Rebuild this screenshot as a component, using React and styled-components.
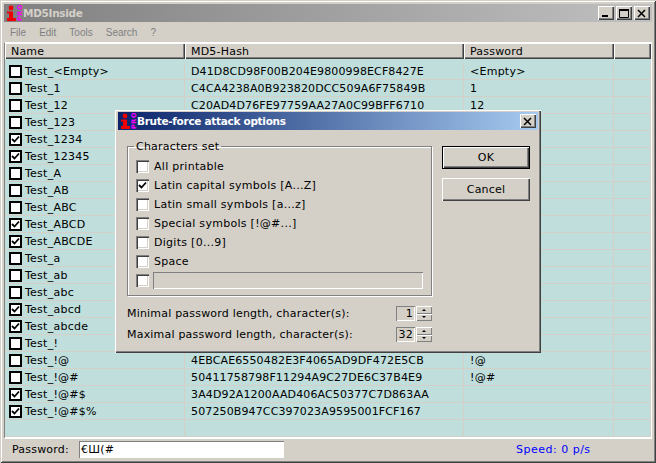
import React from 'react';
import styled, { createGlobalStyle } from 'styled-components';

const GlobalStyle = createGlobalStyle`
  html, body {
    margin: 0;
    padding: 0;
    overflow: hidden;
    background: #d4d0c8;
  }
  * {
    box-sizing: border-box;
  }
`;

const Window = styled.div`
  position: relative;
  width: 656px;
  height: 463px;
  display: flex;
  flex-direction: column;
  padding: 4px 4px 3px 4px;
  background: #d4d0c8;
  font-family: 'DejaVu Sans', Verdana, sans-serif;
  font-size: 11px;
  letter-spacing: 0.2px;
  color: #000;
  box-shadow: inset 1px 1px 0 #d4d0c8, inset -1px -1px 0 #404040, inset 2px 2px 0 #fff, inset -2px -2px 0 #808080;
`;

const TitleBar = styled.div`
  height: 18px;
  flex: none;
  display: flex;
  align-items: center;
  justify-content: space-between;
  padding: 0 2px 0 1px;
  background: ${(props) => (props.$active
    ? 'linear-gradient(to right, #0a246a, #a6caf0)'
    : 'linear-gradient(to right, #808080, #c0c0c0)')};
  color: ${(props) => (props.$active ? '#fff' : '#d4d0c8')};
  font-weight: bold;
  font-size: 10.5px;
  letter-spacing: -0.3px;
`;

const TitleLeft = styled.div`
  display: flex;
  align-items: center;
`;

const TitleButtons = styled.div`
  display: flex;
  gap: 2px;
`;

const CaptionButton = styled.div`
  width: 16px;
  height: 14px;
  display: flex;
  align-items: center;
  justify-content: center;
  background: #d4d0c8;
  box-shadow: inset 1px 1px 0 #fff, inset -1px -1px 0 #404040, inset -2px -2px 0 #808080;
`;

const MenuBar = styled.div`
  height: 20px;
  flex: none;
  display: flex;
  align-items: center;
  gap: 13px;
  padding: 1px 0 0 6px;
  font-family: 'Liberation Sans', Arial, sans-serif;
  font-size: 10px;
  letter-spacing: 0;
  color: #808080;
`;

const Table = styled.div`
  flex: none;
  height: 397px;
  overflow: hidden;
  background: #bfdedc;
  border-top: 1px solid #fff;
  border-left: 1px solid #808080;
  border-right: 1px solid #fff;
  border-bottom: 2px solid #fff;
`;

const cols = '180px 279px 150px 1fr';

const HeaderRow = styled.div`
  display: grid;
  grid-template-columns: ${cols};
  height: 16px;
`;

const HeaderCell = styled.div`
  display: flex;
  align-items: center;
  padding: 1px 0 0 6px;
  background: #d4d0c8;
  box-shadow: inset 1px 1px 0 #fff, inset -1px -1px 0 #404040, inset -2px -2px 0 #808080;
`;

const Row = styled.div`
  display: grid;
  grid-template-columns: ${cols};
  height: ${(props) => (props.$first ? 21 : 17)}px;
  padding-top: ${(props) => (props.$first ? 4 : 0)}px;
  border-bottom: 1px solid #d4d0c8;
`;

const Cell = styled.div`
  display: flex;
  align-items: center;
  gap: 3px;
  padding-left: ${(props) => props.$pad || 6}px;
  letter-spacing: ${(props) => (props.$hash ? 0.13 : 0.25)}px;
  border-right: 1px solid #d4d0c8;
  white-space: nowrap;
`;

const ListCheck = styled.div`
  width: 13px;
  height: 13px;
  flex: none;
  background: #fff;
  border: 2px solid #000;
  display: flex;
  align-items: center;
  justify-content: center;
`;

const StatusBar = styled.div`
  flex: 1;
  display: flex;
  align-items: center;
  padding: 0 0 0 8px;
`;

const StatusLabel = styled.span`
  width: 67px;
`;

const PasswordInput = styled.div`
  width: 205px;
  height: 17px;
  padding-left: 2px;
  display: flex;
  align-items: center;
  background: #fff;
  box-shadow: inset 1px 1px 0 #808080;
`;

const Speed = styled.span`
  margin-left: 232px;
  letter-spacing: 0.5px;
  color: #0000ff;
`;

const Dialog = styled.div`
  position: absolute;
  left: 115px;
  top: 110px;
  width: 426px;
  height: 243px;
  padding: 2px 3px 3px 3px;
  display: flex;
  flex-direction: column;
  background: #d4d0c8;
  box-shadow: inset 1px 1px 0 #fff, inset -1px -1px 0 #404040, inset -2px -2px 0 #808080;
`;

const DialogBody = styled.div`
  display: grid;
  grid-template-columns: 305px 88px;
  column-gap: 10px;
  align-items: start;
  padding: 11px 0 0 9px;
`;

const Group = styled.fieldset`
  margin: 0;
  padding: 8px 8px 0 8px;
  height: 155px;
  min-width: 0;
  border: 1px solid #808080;
  box-shadow: 1px 1px 0 #fff, inset 1px 1px 0 #fff;
`;

const GroupTitle = styled.legend`
  margin-left: -2px;
  padding: 0 2px;
  line-height: 11px;
`;

const OptionList = styled.div`
  display: flex;
  flex-direction: column;
  gap: 6px;
`;

const Option = styled.label`
  display: flex;
  align-items: center;
  gap: 5px;
  height: 13px;
  letter-spacing: 0.28px;
`;

const SunkenCheck = styled.div`
  width: 13px;
  height: 13px;
  flex: none;
  background: #fff;
  display: flex;
  align-items: center;
  justify-content: center;
  box-shadow: inset 1px 1px 0 #808080, inset 2px 2px 0 #404040, inset -1px -1px 0 #fff, inset -2px -2px 0 #d4d0c8;
`;

const CustomField = styled.div`
  flex: 1;
  height: 17px;
  margin-left: -1px;
  box-shadow: inset 1px 1px 0 #808080, inset -1px -1px 0 #fff;
`;

const ButtonColumn = styled.div`
  display: flex;
  flex-direction: column;
  gap: 9px;
  margin-top: 5px;
`;

const Button = styled.div`
  height: 23px;
  display: flex;
  align-items: center;
  justify-content: center;
  background: #d4d0c8;
  border: ${(props) => (props.$default ? '1px solid #000' : 'none')};
  box-shadow: inset 1px 1px 0 #fff, inset -1px -1px 0 #404040, inset -2px -2px 0 #808080;
`;

const LengthList = styled.div`
  display: flex;
  flex-direction: column;
  gap: 6px;
  padding: 10px 0 0 9px;
  width: 314px;
`;

const LengthRow = styled.div`
  display: flex;
  align-items: center;
  justify-content: space-between;
  height: 15px;
`;

const Spinner = styled.div`
  display: flex;
  gap: 1px;
`;

const SpinValue = styled.div`
  width: 19px;
  height: 15px;
  padding-right: 2px;
  display: flex;
  align-items: center;
  justify-content: flex-end;
  box-shadow: inset 1px 1px 0 #808080, inset -1px -1px 0 #fff;
`;

const SpinArrows = styled.div`
  display: flex;
  flex-direction: column;
  width: 16px;
  height: 15px;
`;

const SpinButton = styled.div`
  flex: 1;
  display: flex;
  align-items: center;
  justify-content: center;
  background: #d4d0c8;
  box-shadow: inset 1px 1px 0 #fff, inset -1px -1px 0 #808080;

  &::after {
    content: '';
    border-left: 2px solid transparent;
    border-right: 2px solid transparent;
    ${(props) => (props.$down ? 'border-top: 2px solid #000;' : 'border-bottom: 2px solid #000;')}
  }
`;

// hash and password of the rows under the dialog can't be seen, so they stay empty
const rows = [
  ['Test_<Empty>', 'D41D8CD98F00B204E9800998ECF8427E', '<Empty>', false],
  ['Test_1', 'C4CA4238A0B923820DCC509A6F75849B', '1', false],
  ['Test_12', 'C20AD4D76FE97759AA27A0C99BFF6710', '12', false],
  ['Test_123', '', '', false],
  ['Test_1234', '', '', true],
  ['Test_12345', '', '', true],
  ['Test_A', '', '', false],
  ['Test_AB', '', '', false],
  ['Test_ABC', '', '', false],
  ['Test_ABCD', '', '', true],
  ['Test_ABCDE', '', '', true],
  ['Test_a', '', '', false],
  ['Test_ab', '', '', false],
  ['Test_abc', '', '', false],
  ['Test_abcd', '', '', true],
  ['Test_abcde', '', '', true],
  ['Test_!', '', '', false],
  ['Test_!@', '4EBCAE6550482E3F4065AD9DF472E5CB', '!@', false],
  ['Test_!@#', '50411758798F11294A9C27DE6C37B4E9', '!@#', false],
  ['Test_!@#$', '3A4D92A1200AAD406AC50377C7D863AA', '', true],
  ['Test_!@#$%', '507250B947CC397023A9595001FCF167', '', true],
  ['', '', '', null],
];

const options = [
  ['All printable', false],
  ['Latin capital symbols [A...Z]', true],
  ['Latin small symbols [a...z]', false],
  ['Special symbols [!@#...]', false],
  ['Digits [0...9]', false],
  ['Space', false],
];

function CheckMark() {
  return (
    <svg width="9" height="9" viewBox="0 0 9 9">
      <path d="M1 4 L3.5 6.5 L8 1.5" fill="none" stroke="#000" strokeWidth="1.8" />
    </svg>
  );
}

function AppIcon() {
  return (
    <svg width="18" height="17" viewBox="0 0 18 17" style={{ flex: 'none' }}>
      <circle cx="6" cy="3" r="2.4" fill="#f00000" />
      <path d="M2 6.5 H8 V13 H11 V16 H2 V13 H4 V8.5 H2 Z" fill="#f00000" />
      <text x="0" y="0" transform="translate(17 16) rotate(-90)" fontFamily="DejaVu Sans" fontSize="6.5" letterSpacing="0.6" fill="#ff00ff">PRO</text>
    </svg>
  );
}

function App() {
  return (
    <>
      <GlobalStyle />
      <Window>
        <TitleBar>
          <TitleLeft><AppIcon />MD5Inside</TitleLeft>
          <TitleButtons>
            <CaptionButton>
              <svg width="10" height="9"><rect x="1" y="6" width="6" height="2" fill="#000" /></svg>
            </CaptionButton>
            <CaptionButton>
              <svg width="10" height="9"><path d="M0.5 1 H9.5 V8.5 H0.5 Z" fill="none" stroke="#000" /><rect x="0" y="0" width="10" height="2" fill="#000" /></svg>
            </CaptionButton>
            <CaptionButton>
              <svg width="10" height="9"><path d="M1 1 L8 8 M8 1 L1 8" stroke="#000" strokeWidth="1.5" /></svg>
            </CaptionButton>
          </TitleButtons>
        </TitleBar>
        <MenuBar>
          <span>File</span><span>Edit</span><span>Tools</span><span>Search</span><span>?</span>
        </MenuBar>
        <Table>
          <HeaderRow>
            <HeaderCell>Name</HeaderCell>
            <HeaderCell>MD5-Hash</HeaderCell>
            <HeaderCell>Password</HeaderCell>
            <HeaderCell />
          </HeaderRow>
          {rows.map(([name, hash, password, checked], i) => (
            <Row key={i} $first={i === 0}>
              <Cell $pad={4}>
                {checked !== null && <ListCheck>{checked && <CheckMark />}</ListCheck>}
                {name}
              </Cell>
              <Cell $hash>{hash}</Cell>
              <Cell>{password}</Cell>
              <Cell />
            </Row>
          ))}
        </Table>
        <StatusBar>
          <StatusLabel>Password:</StatusLabel>
          <PasswordInput>€Ш(#</PasswordInput>
          <Speed>Speed: 0 p/s</Speed>
        </StatusBar>

        <Dialog>
          <TitleBar $active>
            <TitleLeft><AppIcon />Brute-force attack options</TitleLeft>
            <CaptionButton>
              <svg width="10" height="9"><path d="M1 1 L8 8 M8 1 L1 8" stroke="#000" strokeWidth="1.5" /></svg>
            </CaptionButton>
          </TitleBar>
          <DialogBody>
            <Group>
              <GroupTitle>Characters set</GroupTitle>
              <OptionList>
                {options.map(([label, checked]) => (
                  <Option key={label}>
                    <SunkenCheck>{checked && <CheckMark />}</SunkenCheck>
                    {label}
                  </Option>
                ))}
                <Option>
                  <SunkenCheck />
                  <CustomField />
                </Option>
              </OptionList>
            </Group>
            <ButtonColumn>
              <Button $default>OK</Button>
              <Button>Cancel</Button>
            </ButtonColumn>
          </DialogBody>
          <LengthList>
            <LengthRow>
              Minimal password length, character(s):
              <Spinner>
                <SpinValue>1</SpinValue>
                <SpinArrows><SpinButton /><SpinButton $down /></SpinArrows>
              </Spinner>
            </LengthRow>
            <LengthRow>
              Maximal password length, character(s):
              <Spinner>
                <SpinValue>32</SpinValue>
                <SpinArrows><SpinButton /><SpinButton $down /></SpinArrows>
              </Spinner>
            </LengthRow>
          </LengthList>
        </Dialog>
      </Window>
    </>
  );
}

export default App;
